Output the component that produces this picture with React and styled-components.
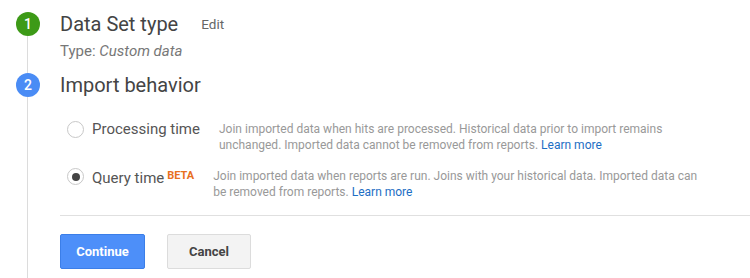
import React from 'react';
import styled, { createGlobalStyle } from 'styled-components';

const GlobalStyle = createGlobalStyle`
  html, body {
    margin: 0;
    padding: 0;
    background: #fff;
  }
  body {
    font-family: Roboto, "Liberation Sans", Arial, sans-serif;
    color: #444;
  }
`;

const steps = [
  {
    num: 1,
    color: '#3d9a17',
  },
  {
    num: 2,
    color: '#4a8cf5',
  },
];

const App = () => (
  <React.Fragment>
    <GlobalStyle />
    <Page>
      <Step>
        <Rail>
          <StepCircle color={steps[0].color}>1</StepCircle>
          <RailLine />
        </Rail>
        <StepBody spacing={13}>
          <StepHeader>
            <StepTitle>Data Set type</StepTitle>
            <EditLink>Edit</EditLink>
          </StepHeader>
          <StepSummary>
            Type: <em>Custom data</em>
          </StepSummary>
        </StepBody>
      </Step>
      <Step grow>
        <Rail>
          <StepCircle color={steps[1].color}>2</StepCircle>
          <RailLine />
        </Rail>
        <StepBody spacing={8}>
          <StepHeader>
            <StepTitle>Import behavior</StepTitle>
          </StepHeader>
          <RadioGroup>
            <RadioRow>
              <RadioLabel>
                <Radio />
                <LabelText>Processing time</LabelText>
              </RadioLabel>
              <Description>
                Join imported data when hits are processed. Historical data
                prior to import remains unchanged. Imported data cannot be
                removed from reports. <LearnMore href="#">Learn more</LearnMore>
              </Description>
            </RadioRow>
            <RadioRow>
              <RadioLabel>
                <Radio checked />
                <LabelText>
                  Query time<Beta>BETA</Beta>
                </LabelText>
              </RadioLabel>
              <Description>
                Join imported data when reports are run. Joins with your
                historical data. Imported data can be removed from reports.{' '}
                <LearnMore href="#">Learn more</LearnMore>
              </Description>
            </RadioRow>
          </RadioGroup>
          <Divider />
          <ButtonBar>
            <PrimaryButton>Continue</PrimaryButton>
            <SecondaryButton>Cancel</SecondaryButton>
          </ButtonBar>
        </StepBody>
      </Step>
    </Page>
  </React.Fragment>
);

export default App;

const Page = styled.div`
  display: flex;
  flex-direction: column;
  min-height: 278px;
  padding-top: 12px;
  box-sizing: border-box;
`;

const Step = styled.div`
  display: flex;
  flex: ${(p) => (p.grow ? 1 : '0 0 auto')};
`;

const Rail = styled.div`
  display: flex;
  flex-direction: column;
  align-items: center;
  width: 56px;
  flex-shrink: 0;
`;

const StepCircle = styled.div`
  width: 24px;
  height: 24px;
  border-radius: 50%;
  background: ${(p) => p.color};
  color: #fff;
  font-size: 14px;
  font-weight: 500;
  display: flex;
  align-items: center;
  justify-content: center;
  flex-shrink: 0;
`;

const RailLine = styled.div`
  flex: 1;
  width: 1px;
  background: #dcdcdc;
  margin-left: -1px;
`;

const StepBody = styled.div`
  flex: 1;
  padding-left: 4px;
  padding-bottom: ${(p) => p.spacing}px;
`;

const StepHeader = styled.div`
  display: flex;
  align-items: center;
  height: 24px;
`;

const StepTitle = styled.h2`
  margin: 0;
  font-size: 20px;
  font-weight: 400;
  color: #444;
  line-height: 24px;
`;

const EditLink = styled.span`
  margin-left: 23px;
  font-size: 13.5px;
  color: #666;
`;

const StepSummary = styled.div`
  margin-top: 6px;
  font-size: 15px;
  line-height: 18px;
  color: #777;

  em {
    font-style: italic;
  }
`;

const RadioGroup = styled.div`
  display: flex;
  flex-direction: column;
  gap: 15px;
  margin-top: 24px;
  padding-left: 7px;
  padding-right: 44px;
`;

const RadioRow = styled.div`
  display: flex;
  align-items: flex-start;
  gap: 19px;
`;

const RadioLabel = styled.label`
  display: flex;
  align-items: center;
  gap: 8px;
  flex-shrink: 0;
  height: 17px;
`;

const Radio = styled.span`
  width: 15px;
  height: 15px;
  border-radius: 50%;
  border: 1px solid #c8c8c8;
  background: #fff;
  display: flex;
  align-items: center;
  justify-content: center;
  flex-shrink: 0;

  &::after {
    content: '';
    display: ${(p) => (p.checked ? 'block' : 'none')};
    width: 8px;
    height: 8px;
    border-radius: 50%;
    background: #444;
  }
`;

const LabelText = styled.span`
  font-size: 15px;
  line-height: 17px;
  color: #555;
  white-space: nowrap;
`;

const Beta = styled.span`
  font-size: 11px;
  font-weight: 700;
  color: #e8701f;
  margin-left: 3px;
  vertical-align: 4px;
`;

const Description = styled.p`
  margin: 0;
  font-size: 12px;
  line-height: 16px;
  color: #999;
`;

const LearnMore = styled.a`
  color: #1d6ec4;
  text-decoration: none;
`;

const Divider = styled.hr`
  margin: 15px 0 0;
  border: 0;
  border-top: 1px solid #e0e0e0;
`;

const ButtonBar = styled.div`
  display: flex;
  gap: 22px;
  margin-top: 18px;
`;

const BaseButton = styled.button`
  height: 35px;
  width: 85px;
  border-radius: 2px;
  font-family: Roboto, "Liberation Sans", Arial, sans-serif;
  font-size: 13px;
  font-weight: 700;
  cursor: pointer;
`;

const PrimaryButton = styled(BaseButton)`
  background: #4d8ff9;
  border: 1px solid #3b7ee8;
  color: #fff;
`;

const SecondaryButton = styled(BaseButton)`
  width: 84px;
  background: #f3f3f3;
  border: 1px solid #dcdcdc;
  color: #444;
`;
